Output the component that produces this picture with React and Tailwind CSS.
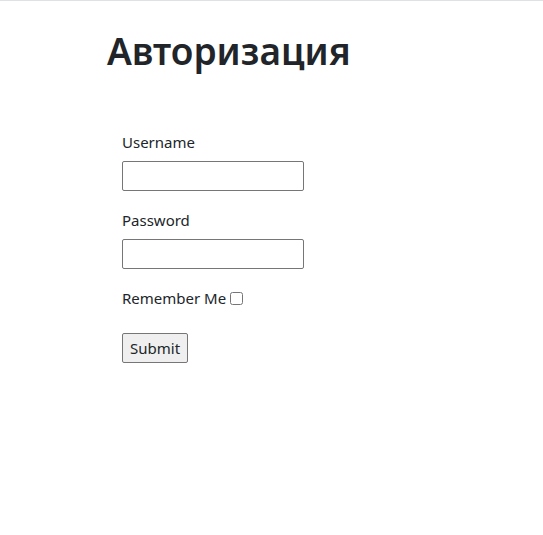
import React from "react";

export default function App() {
  return (
    <div className="min-h-[535px] bg-white border-t border-[#dee2e6] text-[#212529] [font-family:'Noto_Sans',sans-serif]">
      <div className="pl-[107px] pt-[26px]">
        <h1 className="text-[37px] leading-[48px] font-semibold">Авторизация</h1>
        <form className="pl-[15px] pt-[55px] flex flex-col items-start">
          <label className="text-[15px] leading-[24px]">Username</label>
          <input
            type="text"
            className="mt-[7px] w-[182px] h-[30px] border border-[#767676] rounded-[2px] px-1"
          />
          <label className="mt-[17px] text-[15px] leading-[24px]">Password</label>
          <input
            type="password"
            className="mt-[7px] w-[182px] h-[30px] border border-[#767676] rounded-[2px] px-1"
          />
          <div className="mt-[17px] flex items-center gap-[4px] text-[15px] leading-[24px]">
            <span>Remember Me</span>
            <input type="checkbox" className="w-[13px] h-[13px]" />
          </div>
          <button
            type="button"
            className="mt-[23px] h-[30px] px-[7px] text-[15px] bg-[#efefef] border border-[#767676] rounded-[2px]"
          >
            Submit
          </button>
        </form>
      </div>
    </div>
  );
}
